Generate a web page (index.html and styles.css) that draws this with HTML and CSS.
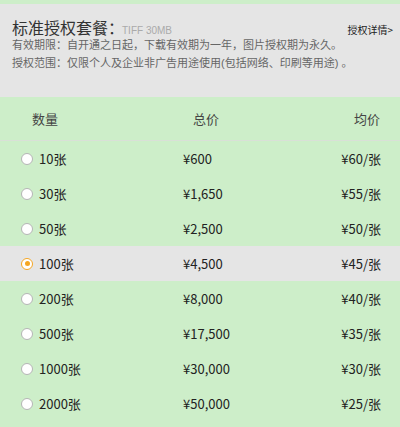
FILE: index.html
```html
<!DOCTYPE html>
<html lang="zh-CN">
<head>
<meta charset="utf-8">
<link rel="stylesheet" href="styles.css">
</head>
<body>
<div class="panel">
  <div class="title-row">
    <span class="title">标准授权套餐：</span>
    <span class="fmt">TIFF 30MB</span>
    <a class="detail">授权详情&gt;</a>
  </div>
  <p class="info">有效期限：自开通之日起，下载有效期为一年，图片授权期为永久。</p>
  <p class="info">授权范围：仅限个人及企业非广告用途使用(包括网络、印刷等用途) 。</p>
</div>
<div class="table">
  <div class="head">
    <span class="h1">数量</span>
    <span class="h2">总价</span>
    <span class="h3">均价</span>
  </div>
  <div class="row"><span class="c1"><i class="radio"></i>10张</span><span class="c2">¥600</span><span class="c3">¥60/张</span></div>
  <div class="row"><span class="c1"><i class="radio"></i>30张</span><span class="c2">¥1,650</span><span class="c3">¥55/张</span></div>
  <div class="row"><span class="c1"><i class="radio"></i>50张</span><span class="c2">¥2,500</span><span class="c3">¥50/张</span></div>
  <div class="row active"><span class="c1"><i class="radio on"></i>100张</span><span class="c2">¥4,500</span><span class="c3">¥45/张</span></div>
  <div class="row"><span class="c1"><i class="radio"></i>200张</span><span class="c2">¥8,000</span><span class="c3">¥40/张</span></div>
  <div class="row"><span class="c1"><i class="radio"></i>500张</span><span class="c2">¥17,500</span><span class="c3">¥35/张</span></div>
  <div class="row"><span class="c1"><i class="radio"></i>1000张</span><span class="c2">¥30,000</span><span class="c3">¥30/张</span></div>
  <div class="row"><span class="c1"><i class="radio"></i>2000张</span><span class="c2">¥50,000</span><span class="c3">¥25/张</span></div>
</div>
</body>
</html>
```
FILE: styles.css
```css
html, body {
  margin: 0;
  padding: 0;
}
body {
  background: #cdeec9;
  font-family: "Noto Sans CJK SC", "Microsoft YaHei", sans-serif;
  color: #333;
  width: 400px;
  height: 427px;
  overflow: hidden;
  padding-top: 4px;
  box-sizing: border-box;
}
.panel {
  background: #e5e5e5;
  height: 93px;
  box-sizing: border-box;
  padding: 13px 7px 0 12px;
}
.title-row {
  display: flex;
  align-items: baseline;
  height: 20px;
  line-height: 20px;
}
.title {
  font-size: 16px;
  color: #333;
}
.fmt {
  font-family: "Liberation Sans", "Noto Sans CJK SC", sans-serif;
  font-size: 10px;
  color: #aaa;
  margin-left: -2px;
}
.detail {
  margin-left: auto;
  font-size: 10px;
  color: #222;
}
.info {
  margin: 0;
  font-family: "Liberation Sans", "Noto Sans CJK SC", sans-serif;
  font-size: 11px;
  line-height: 18px;
  color: #666;
  white-space: nowrap;
}
.info:first-of-type {
  margin-top: -1px;
}
.table {
  font-size: 13px;
  color: #222;
}
.head {
  display: flex;
  align-items: center;
  height: 43px;
  border-bottom: 1px solid #d9e0d7;
  padding: 0 20px 0 32px;
  color: #444;
}
.h1 { width: 161px; }
.h2 { flex: 1; }
.h3 { text-align: right; }
.row {
  display: flex;
  align-items: center;
  height: 35px;
  padding: 0 19px 0 21px;
}
.row.active {
  background: #e5e5e5;
}
.c1 {
  width: 162px;
  display: flex;
  align-items: center;
}
.c2 { flex: 1; }
.c3 { text-align: right; }
.radio {
  width: 12px;
  height: 12px;
  box-sizing: border-box;
  border: 1px solid #b5b5b5;
  border-radius: 50%;
  background: #fff;
  margin-right: 6px;
  position: relative;
}
.radio.on {
  border-color: #f5a623;
}
.radio.on::after {
  content: "";
  position: absolute;
  left: 2.5px;
  top: 2.5px;
  width: 5px;
  height: 5px;
  border-radius: 50%;
  background: #f5a623;
}
```
